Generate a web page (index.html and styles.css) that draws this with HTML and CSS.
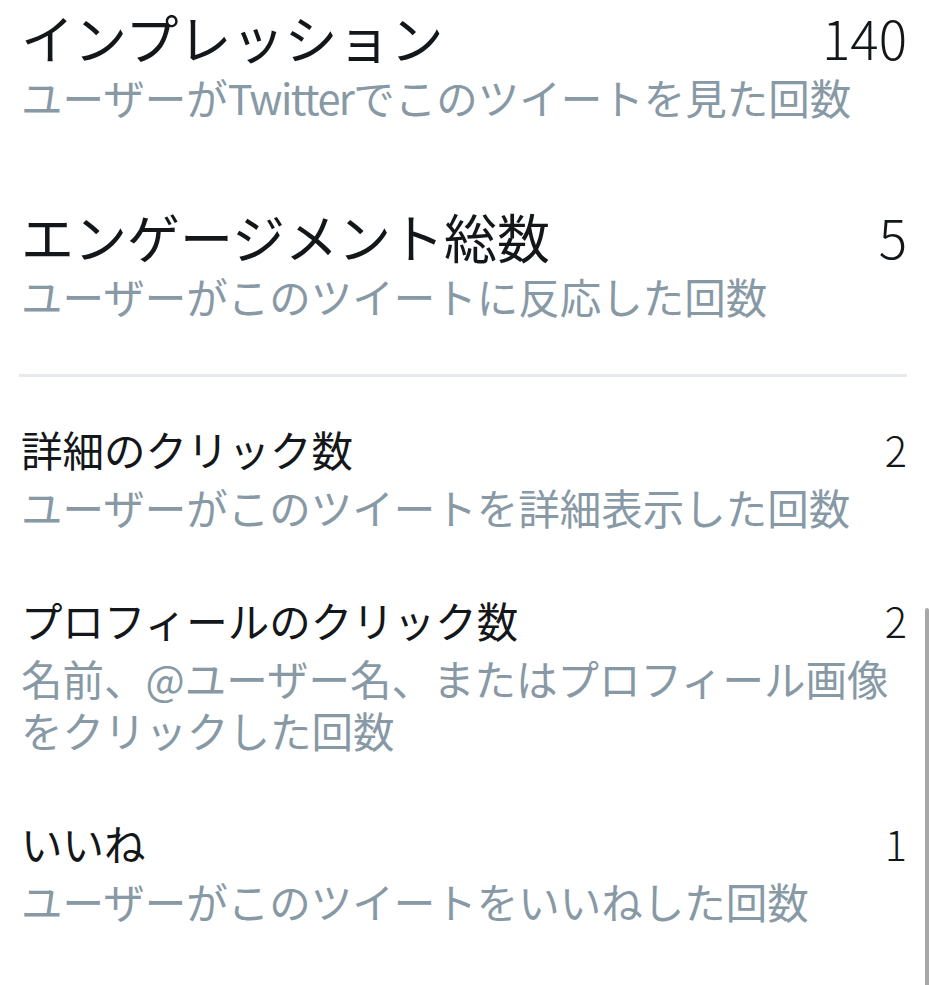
FILE: index.html
```html
<!DOCTYPE html>
<html lang="ja">
<head>
  <meta charset="UTF-8">
  <title>ツイートアクティビティ</title>
  <link rel="stylesheet" href="styles.css">
</head>
<body>

  <div class="stats">
    <div class="stat stat-big">
      <div class="stat-head">
        <span class="stat-title">インプレッション</span>
        <span class="stat-num">140</span>
      </div>
      <p class="stat-desc">ユーザーが<span class="latin">Twitter</span>でこのツイートを見た回数</p>
    </div>

    <div class="stat stat-big stat-second">
      <div class="stat-head">
        <span class="stat-title">エンゲージメント総数</span>
        <span class="stat-num">5</span>
      </div>
      <p class="stat-desc">ユーザーがこのツイートに反応した回数</p>
    </div>

    <hr class="divider">

    <div class="stat">
      <div class="stat-head">
        <span class="stat-title">詳細のクリック数</span>
        <span class="stat-num">2</span>
      </div>
      <p class="stat-desc">ユーザーがこのツイートを詳細表示した回数</p>
    </div>

    <div class="stat">
      <div class="stat-head">
        <span class="stat-title">プロフィールのクリック数</span>
        <span class="stat-num">2</span>
      </div>
      <p class="stat-desc">名前、@ユーザー名、またはプロフィール画像をクリックした回数</p>
    </div>

    <div class="stat">
      <div class="stat-head">
        <span class="stat-title">いいね</span>
        <span class="stat-num">1</span>
      </div>
      <p class="stat-desc">ユーザーがこのツイートをいいねした回数</p>
    </div>
  </div>

  <!-- scroll indicator -->
  <div class="scroll-thumb"></div>

</body>
</html>
```

FILE: styles.css
```css
body {
  margin: 0;
  background: #fff;
  font-family: "Noto Sans CJK JP", sans-serif;
  color: #14171a;
}
.stats {
  padding: 5px 22px 0 19px;
}
.stat {
  margin-top: 61px;
}
.stat:first-child {
  margin-top: 0;
}
.stat-head {
  display: flex;
  justify-content: space-between;
  align-items: baseline;
  font-size: 41.5px;
  line-height: 52px;
}
.stat-title {
  padding-left: 2px;
}
.stat-num {
  font-weight: 300;
}
.stat-desc {
  margin: 6px 0 0;
  padding-left: 2px;
  font-size: 41.5px;
  line-height: 52px;
  color: #8899a6;
}
.latin {
  letter-spacing: -1.6px;
}

/* big rows at the top */
.stat-big .stat-head {
  font-size: 53px;
  line-height: 64px;
}
.stat-big .stat-desc {
  margin-top: 2px;
}
.stat-second {
  margin-top: 81px;
}

.divider {
  border: none;
  height: 3px;
  background: #e6eaee;
  margin: 52px 0 46px;
}
.divider + .stat {
  margin-top: 0;
}

.scroll-thumb {
  position: absolute;
  right: 0;
  top: 608px;
  width: 4px;
  height: 380px;
  background: #a8a8a8;
  border-radius: 2px 2px 0 0;
}
```
